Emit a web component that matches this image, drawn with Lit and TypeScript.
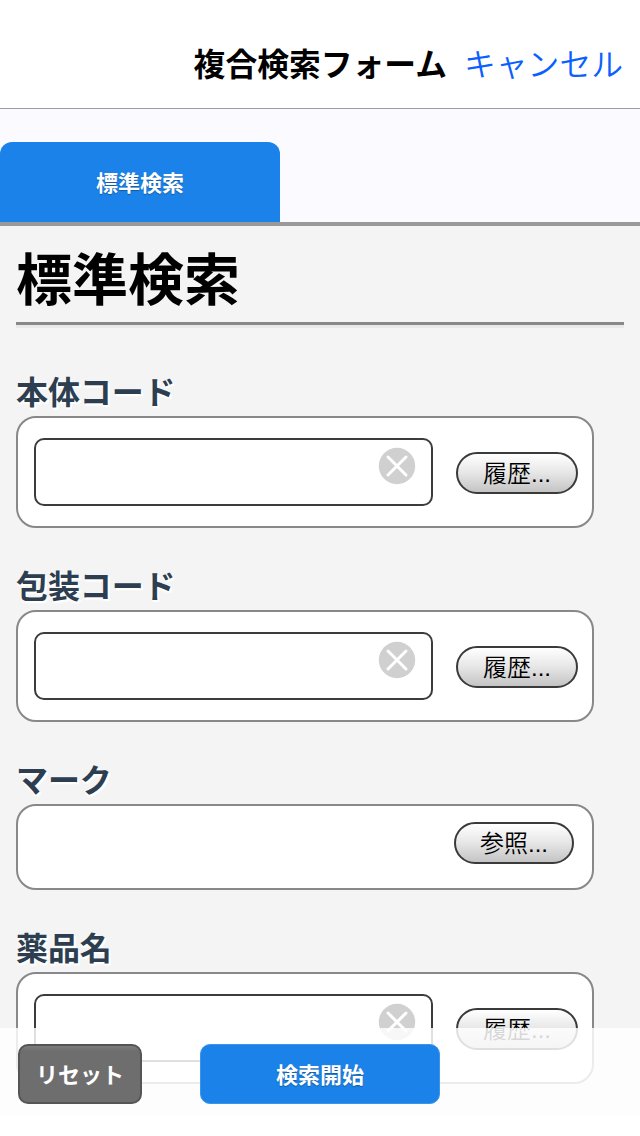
import { LitElement, html, css, nothing } from "lit";
import { customElement, property } from "lit/decorators.js";

@customElement("search-field")
class SearchField extends LitElement {
  @property() label = "";
  @property() action = "";
  @property({ type: Boolean }) input = false;

  static styles = css`
    :host { display: block; }
    .label {
      margin: 0;
      height: 48px;
      font-size: 32px;
      line-height: 44px;
      font-weight: 700;
      letter-spacing: -0.1px;
      color: #2c3e50;
      text-shadow: 0 2px 2px #fff, 2px 2px 0 #fff;
      white-space: nowrap;
    }
    .panel {
      box-sizing: border-box;
      width: 578px;
      height: 86px;
      border: 2px solid #888;
      border-radius: 20px;
      background: #fff;
      display: flex;
      align-items: center;
      justify-content: flex-end;
      padding: 0 18px 8px 16px;
    }
    .panel.with-input {
      height: 112px;
      padding: 0 14px 0 16px;
      justify-content: space-between;
    }
    .box {
      box-sizing: border-box;
      width: 399px;
      height: 68px;
      border: 2px solid #3c3c3c;
      border-radius: 10px;
      display: flex;
      justify-content: flex-end;
      align-items: flex-start;
      padding: 7px 15px 0 0;
    }
    .clear { display: block; width: 38px; height: 38px; }
    .btn {
      box-sizing: border-box;
      width: 120px;
      height: 42px;
      margin: 0;
      padding: 1px 0 0;
      border: 2px solid #3a3a3a;
      border-radius: 21px;
      background: linear-gradient(#fff, #e6e6e6 50%, #c4c4c4);
      color: #000;
      font: 350 24px/38px "Liberation Sans", "Noto Sans CJK JP", sans-serif;
      white-space: nowrap;
    }
    .with-input .btn { width: 122px; margin-top: 2px; }
  `;

  render() {
    return html`
      <h2 class="label">${this.label}</h2>
      <div class="panel ${this.input ? "with-input" : ""}">
        ${this.input
          ? html`<div class="box">
              <svg class="clear" viewBox="0 0 38 38">
                <circle cx="19" cy="19" r="18.2" fill="#d0d0d0" />
                <path d="M10 10 28 28M28 10 10 28" fill="none" stroke="#fff" stroke-width="3" stroke-linecap="round" />
              </svg>
            </div>`
          : nothing}
        <button class="btn">${this.action}</button>
      </div>
    `;
  }
}

@customElement("app-root")
class AppRoot extends LitElement {
  static styles = css`
    :host {
      display: block;
      position: relative;
      height: 1136px;
      overflow: hidden;
      background: #f4f4f4;
      font-family: "Noto Sans CJK JP", sans-serif;
      color: #000;
    }
    .nav {
      box-sizing: border-box;
      height: 109px;
      padding: 16px 17px 0 0;
      border-bottom: 1px solid #9c9ca0;
      background: #fff;
      display: flex;
      justify-content: flex-end;
      align-items: center;
      gap: 17px;
      font-size: 31.8px;
      line-height: 48px;
      white-space: nowrap;
    }
    .title { font-weight: 700; }
    .cancel { font-weight: 350; color: #0a60ff; }
    .tabs {
      box-sizing: border-box;
      height: 117px;
      padding-top: 33px;
      background: #fafaff;
      border-bottom: 4px solid #999;
    }
    .tab {
      width: 280px;
      height: 80px;
      border-radius: 12px 12px 0 0;
      background: #1a82e8;
      color: #fff;
      font-size: 22px;
      font-weight: 700;
      line-height: 78px;
      text-align: center;
      text-shadow: 0 1px 1px rgba(0, 0, 0, 0.3);
    }
    .content { padding: 0 16px; }
    .heading {
      margin: 0;
      height: 96px;
      font-size: 56px;
      line-height: 100px;
      font-weight: 700;
      border-bottom: 3px solid #888;
      box-shadow: 0 3px 0 #e9e9e9;
      white-space: nowrap;
    }
    .fields {
      display: flex;
      flex-direction: column;
      gap: 34px;
      padding-top: 43px;
    }
    .footer {
      position: absolute;
      left: 0;
      right: 0;
      bottom: 0;
      box-sizing: border-box;
      height: 108px;
      padding: 16px 18px 0;
      background: linear-gradient(rgba(255, 255, 255, 0.84) 88px, #fff 88px);
      display: flex;
      align-items: flex-start;
      gap: 58px;
    }
    .reset, .search {
      box-sizing: border-box;
      height: 60px;
      margin: 0;
      padding: 0 0 1px;
      border-radius: 10px;
      color: #fff;
      font: 700 22px/53px "Noto Sans CJK JP", sans-serif;
      white-space: nowrap;
    }
    .reset {
      width: 124px;
      border: 2px solid #555;
      background: linear-gradient(#7c7c7c, #6e6e6e 5px);
    }
    .search {
      width: 240px;
      border: 1px solid #3b94ea;
      background: #1a82e8;
      text-shadow: 0 1px 1px rgba(0, 0, 0, 0.3);
    }
  `;

  render() {
    return html`
      <header class="nav">
        <span class="title">複合検索フォーム</span>
        <span class="cancel">キャンセル</span>
      </header>
      <nav class="tabs"><div class="tab">標準検索</div></nav>
      <main class="content">
        <h1 class="heading">標準検索</h1>
        <div class="fields">
          <search-field label="本体コード" action="履歴..." input></search-field>
          <search-field label="包装コード" action="履歴..." input></search-field>
          <search-field label="マーク" action="参照..."></search-field>
          <search-field label="薬品名" action="履歴..." input></search-field>
        </div>
      </main>
      <footer class="footer">
        <button class="reset">リセット</button>
        <button class="search">検索開始</button>
      </footer>
    `;
  }
}
